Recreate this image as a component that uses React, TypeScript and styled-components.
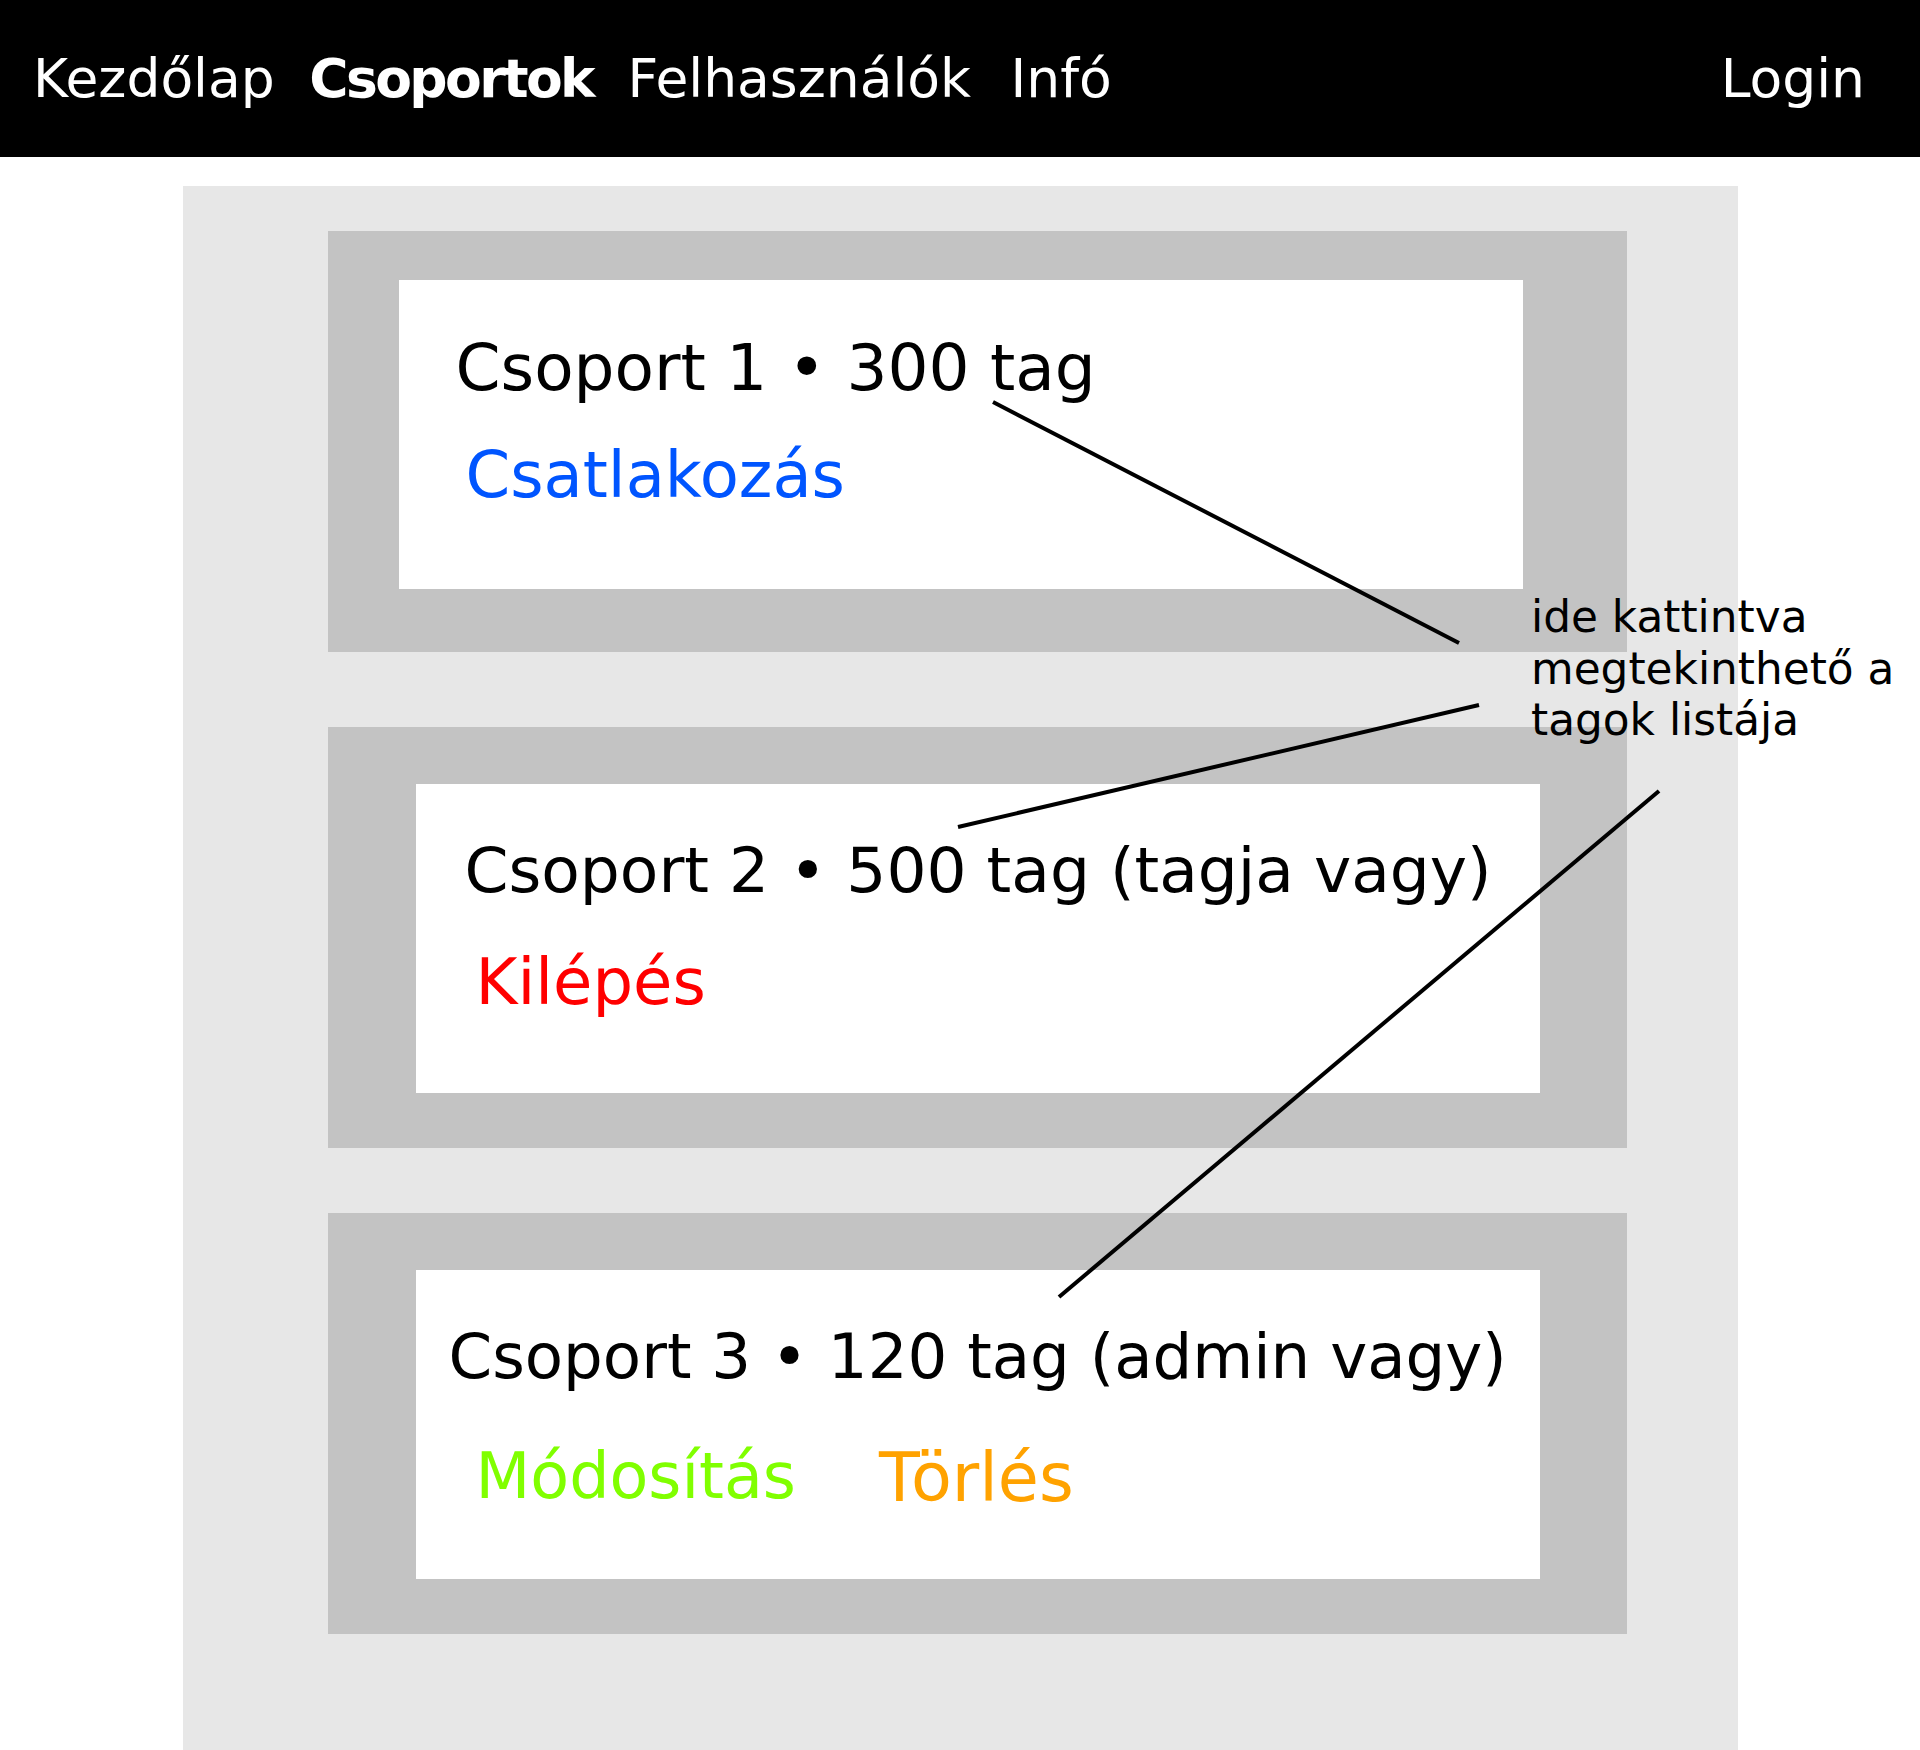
import React from "react";
import styled, { createGlobalStyle } from "styled-components";

const Global = createGlobalStyle`
  html, body {
    margin: 0;
    padding: 0;
    background: #ffffff;
    font-family: "DejaVu Sans", "Liberation Sans", sans-serif;
  }
`;

const Page = styled.div`
  position: relative;
  width: 1920px;
  height: 1750px;
  overflow: hidden;
  background: #ffffff;
`;

const Header = styled.header`
  height: 157px;
  background: #000000;
  display: flex;
  align-items: center;
  padding: 0 55px 0 33px;
  box-sizing: border-box;
`;

const NavList = styled.nav`
  display: flex;
  align-items: center;
  gap: 34.5px;
  flex: 1;
`;

const NavItem = styled.a<{ $active?: boolean; $extra?: number }>`
  color: #ffffff;
  font-size: 53.5px;
  font-weight: ${(p) => (p.$active ? 700 : 400)};
  letter-spacing: ${(p) => (p.$active ? "-2.6px" : "0")};
  margin-left: ${(p) => p.$extra ?? 0}px;
  text-decoration: none;
  white-space: nowrap;
`;

const Panel = styled.main`
  width: 1555px;
  height: 1564px;
  margin: 29px auto 0;
  background: #e7e7e7;
  box-sizing: border-box;
  padding: 45px 0 0 145px;
  display: flex;
  flex-direction: column;
`;

const Outer = styled.section<{ $pad: string; $mt: number }>`
  width: 1299px;
  height: 421px;
  box-sizing: border-box;
  background: #c3c3c3;
  padding: ${(p) => p.$pad};
  margin-top: ${(p) => p.$mt}px;
`;

const Inner = styled.div<{ $top: number; $gap: number }>`
  width: 1124px;
  height: 309px;
  background: #ffffff;
  box-sizing: border-box;
  padding-top: ${(p) => p.$top}px;
  display: flex;
  flex-direction: column;
  gap: ${(p) => p.$gap}px;
`;

const Title = styled.div<{ $indent: number; $size: number }>`
  font-size: ${(p) => p.$size}px;
  color: #000000;
  padding-left: ${(p) => p.$indent}px;
  white-space: nowrap;
`;

const Actions = styled.div<{ $indent: number }>`
  display: flex;
  gap: 83px;
  padding-left: ${(p) => p.$indent}px;
`;

const Action = styled.a<{ $color: string; $size?: number }>`
  font-size: ${(p) => p.$size ?? 64}px;
  color: ${(p) => p.$color};
  text-decoration: none;
  white-space: nowrap;
`;

const Overlay = styled.svg`
  position: absolute;
  left: 0;
  top: 0;
  pointer-events: none;
`;

const Note = styled.div`
  position: absolute;
  left: 1531px;
  top: 591px;
  font-size: 43.8px;
  line-height: 51.6px;
  color: #000000;
  white-space: nowrap;
`;

type ActionDef = { label: string; color: string; size?: number };

const groups: {
  pad: string;
  mt: number;
  top: number;
  gap: number;
  titleIndent: number;
  titleSize: number;
  linkIndent: number;
  title: string;
  actions: ActionDef[];
}[] = [
  {
    pad: "49px 0 0 71px",
    mt: 0,
    top: 50,
    gap: 33,
    titleIndent: 57,
    titleSize: 64.5,
    linkIndent: 67,
    title: "Csoport 1 • 300 tag",
    actions: [{ label: "Csatlakozás", color: "#0055ff" }],
  },
  {
    pad: "57px 0 0 88px",
    mt: 75,
    top: 50,
    gap: 37.5,
    titleIndent: 49,
    titleSize: 63,
    linkIndent: 60,
    title: "Csoport 2 • 500 tag (tagja vagy)",
    actions: [{ label: "Kilépés", color: "#ff0000" }],
  },
  {
    pad: "57px 0 0 88px",
    mt: 65,
    top: 50,
    gap: 46,
    titleIndent: 33,
    titleSize: 62.6,
    linkIndent: 60,
    title: "Csoport 3 • 120 tag (admin vagy)",
    actions: [
      { label: "Módosítás", color: "#80ff00", size: 63.5 },
      { label: "Törlés", color: "#ffa200", size: 66.8 },
    ],
  },
];

export default function App() {
  return (
    <Page>
      <Global />
      <Header>
        <NavList>
          <NavItem>Kezdőlap</NavItem>
          <NavItem $active>Csoportok</NavItem>
          <NavItem>Felhasználók</NavItem>
          <NavItem $extra={5}>Infó</NavItem>
        </NavList>
        <NavItem>Login</NavItem>
      </Header>
      <Panel>
        {groups.map((g) => (
          <Outer key={g.title} $pad={g.pad} $mt={g.mt}>
            <Inner $top={g.top} $gap={g.gap}>
              <Title $indent={g.titleIndent} $size={g.titleSize}>
                {g.title}
              </Title>
              <Actions $indent={g.linkIndent}>
                {g.actions.map((a) => (
                  <Action key={a.label} $color={a.color} $size={a.size}>
                    {a.label}
                  </Action>
                ))}
              </Actions>
            </Inner>
          </Outer>
        ))}
      </Panel>
      <Overlay width={1920} height={1750} viewBox="0 0 1920 1750">
        <g stroke="#000" strokeWidth={4} strokeLinecap="butt">
          <line x1={993} y1={402} x2={1459} y2={643} />
          <line x1={958} y1={827} x2={1479} y2={705} />
          <line x1={1059} y1={1297} x2={1659} y2={791} />
        </g>
      </Overlay>
      <Note>
        ide kattintva
        <br />
        megtekinthető a
        <br />
        tagok listája
      </Note>
    </Page>
  );
}
